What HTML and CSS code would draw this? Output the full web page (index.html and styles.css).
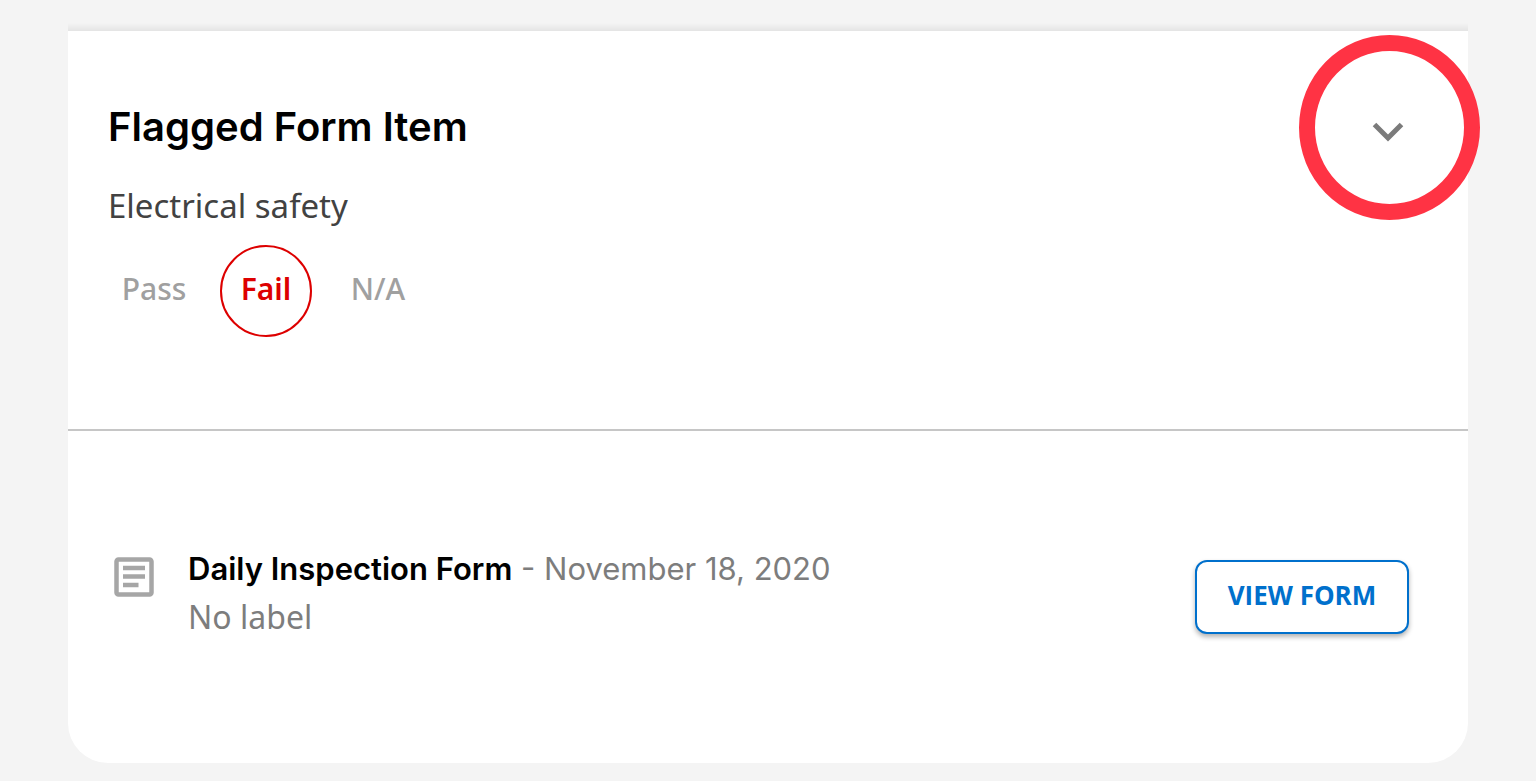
FILE: index.html
```
<!DOCTYPE html>
<html lang="en">
<head>
  <meta charset="UTF-8">
  <meta name="viewport" content="width=device-width, initial-scale=1.0">
  <title>Flagged Form Item</title>
  <link rel="stylesheet" href="styles.css">
</head>
<body>
  <div class="card-shadow"></div>
  <main class="card">
    <!-- Flagged item -->
    <section class="card-header">
      <div class="card-heading">
        <h1 class="card-title">Flagged Form Item</h1>
        <p class="item-name">Electrical safety</p>
        <div class="options">
          <span class="option">Pass</span>
          <span class="option option-fail">Fail</span>
          <span class="option">N/A</span>
        </div>
      </div>
      <div class="toggle-wrap">
        <button class="toggle" type="button" aria-label="Collapse">
          <svg width="32" height="20" viewBox="0 0 32 20" fill="none" stroke="#7b7b7b" stroke-width="5">
            <path d="M2.5 2.5L16 16L29.5 2.5"/>
          </svg>
        </button>
        <div class="highlight-ring"></div>
      </div>
    </section>

    <!-- Source form -->
    <section class="card-body">
      <svg class="form-icon" width="40" height="40" viewBox="0 0 40 40">
        <rect x="2.5" y="2.5" width="35" height="35" rx="2" fill="none" stroke="#a6a6a6" stroke-width="4.5"/>
        <path d="M9 11H31M9 19.5H31M9 28H24.5" stroke="#a6a6a6" stroke-width="4.3"/>
      </svg>
      <div class="form-info">
        <p class="form-line"><strong class="form-name">Daily Inspection Form</strong> - November 18, 2020</p>
        <p class="form-label">No label</p>
      </div>
      <button class="view-button" type="button">VIEW FORM</button>
    </section>
  </main>
</body>
</html>
```

FILE: styles.css
```
* {
  margin: 0;
  padding: 0;
  box-sizing: border-box;
}

body {
  background-color: #f4f4f4;
  font-family: "Noto Sans", sans-serif;
  padding: 23px 68px 18px;
}

/* Soft edge above the card */
.card-shadow {
  height: 8px;
  background: linear-gradient(#f4f4f4, #e4e4e4);
}

.card {
  background-color: #fff;
  border-radius: 0 0 40px 40px;
}

/* Flagged item */
.card-header {
  display: flex;
  justify-content: space-between;
  padding: 72px 60px 92px 40px;
  border-bottom: 2px solid #c6c6c6;
}

.card-title {
  font-family: Inter, sans-serif;
  font-size: 40px;
  line-height: 48px;
  font-weight: 600;
  color: #000;
}

.item-name {
  margin-top: 34px;
  font-size: 33px;
  line-height: 42px;
  color: #424242;
}

.options {
  display: flex;
  align-items: center;
  gap: 20px;
  margin-top: 18px;
}

.option {
  display: flex;
  align-items: center;
  justify-content: center;
  width: 92px;
  height: 92px;
  padding-bottom: 6px;
  font-size: 30px;
  font-weight: 500;
  color: #a0a0a0;
}

.option-fail {
  border: 2px solid #dd0000;
  border-radius: 50%;
  font-weight: 600;
  color: #dd0000;
}

.toggle-wrap {
  position: relative;
  display: flex;
  align-items: center;
  width: 40px;
  height: 58px;
}

.toggle {
  display: flex;
  align-items: center;
  justify-content: center;
  width: 40px;
  height: 58px;
  border: none;
  background: none;
  cursor: pointer;
}

.highlight-ring {
  position: absolute;
  top: -68px;
  left: -69px;
  width: 181px;
  height: 185px;
  border: 16px solid #ff3344;
  border-radius: 50%;
  pointer-events: none;
}

/* Source form */
.card-body {
  display: flex;
  align-items: center;
  padding: 114px 59px 114px 46px;
}

.form-icon {
  flex: none;
  align-self: flex-start;
  margin-top: 12px;
}

.form-info {
  flex: 1;
  margin-left: 34px;
  padding-bottom: 8px;
  font-size: 32px;
  line-height: 48px;
  color: #7d7d7d;
}

.form-line {
  font-family: Inter, sans-serif;
  font-size: 31px;
}

.form-name {
  font-weight: 600;
  color: #000;
}

.view-button {
  width: 214px;
  height: 74px;
  padding-bottom: 4px;
  border: 2px solid #0070cc;
  border-radius: 12px;
  background-color: #fff;
  box-shadow: 0 3px 5px rgba(0, 0, 0, 0.3);
  font-family: "Open Sans", sans-serif;
  font-size: 26px;
  font-weight: 700;
  color: #0070cc;
  cursor: pointer;
}
```
